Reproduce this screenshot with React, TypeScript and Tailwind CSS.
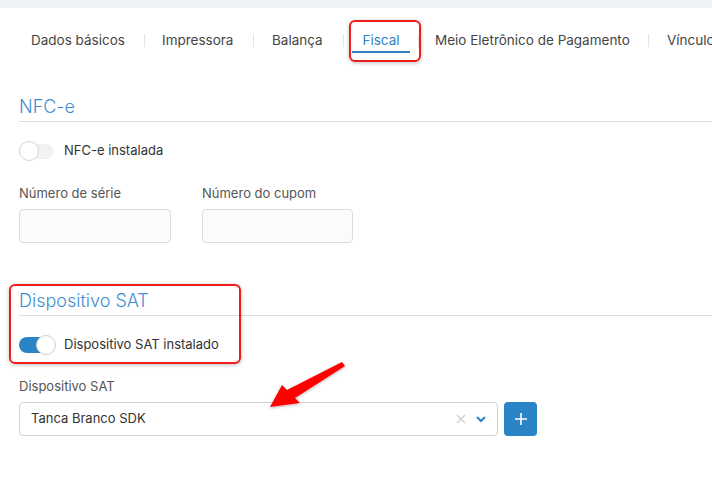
import React from 'react';

const FONT = { fontFamily: 'Inter, "Noto Sans", sans-serif' };

type Tab = { label: string; ml: string; w: string; sepMl?: string; active?: boolean };

const tabs: Tab[] = [
  { label: 'Dados básicos', ml: 'ml-0', w: 'w-[113px]' },
  { label: 'Impressora', ml: 'ml-[17px]', w: 'w-[91px]' },
  { label: 'Balança', ml: 'ml-[18px]', w: 'w-[71px]' },
  { label: 'Fiscal', ml: 'ml-[8px]', w: 'w-[58px]', active: true },
  { label: 'Meio Eletrônico de Pagamento', ml: 'ml-[16px]', w: 'w-[213px]', sepMl: 'ml-[8px]' },
  { label: 'Vínculo', ml: 'ml-[18px]', w: 'w-[80px]' },
];

const Toggle: React.FC<{ on?: boolean }> = ({ on }) =>
  on ? (
    <div className="relative w-[36px] h-[16px] rounded-full bg-[#2a84c6]">
      <div className="absolute right-[-1px] top-[-2px] w-[20px] h-[20px] rounded-full bg-white border border-[#cfcfcf]" />
    </div>
  ) : (
    <div className="relative w-[34px] h-[15px] rounded-full bg-[#f2f2f2] shadow-[inset_0_0_2px_rgba(0,0,0,0.06)]">
      <div className="absolute left-0 top-[-3px] w-[20px] h-[20px] rounded-full bg-white border border-[#d4d4d4]" />
    </div>
  );

const SectionTitle: React.FC<{ title: string }> = ({ title }) => (
  <div className="border-b border-[#dedede] h-[29px] flex items-center">
    <h2 className="text-[18px] font-light text-[#3f8fd2] leading-[28px]">{title}</h2>
  </div>
);

export default function App() {
  return (
    <div className="relative w-[712px] h-[480px] bg-white overflow-hidden text-[#333]" style={FONT}>
      <div className="h-[8px] bg-[#eef1f6]" />

      {/* abas */}
      <div className="flex items-start pl-[31px] pt-[22px] whitespace-nowrap text-[13.5px] text-[#454545]">
        {tabs.map((t, i) => (
          <React.Fragment key={t.label}>
            {i > 0 && (
              <div className={`w-px h-[13px] bg-[#e4e4e4] mt-[4px] shrink-0 ${t.sepMl ?? ''}`} />
            )}
            <div className={`${t.ml} ${t.w} shrink-0`}>
              {t.active ? (
                <div className="flex justify-center pb-[1px] border-b-2 border-[#2f7fc1] text-[#2f80c4] leading-[20px]">
                  {t.label}
                </div>
              ) : (
                <div className="leading-[20px]">{t.label}</div>
              )}
            </div>
          </React.Fragment>
        ))}
      </div>

      {/* NFC-e */}
      <div className="pl-[19px] mt-[40px]">
        <SectionTitle title="NFC-e" />
        <div className="flex items-center gap-[11px] mt-[21px] h-[16px]">
          <Toggle />
          <span className="text-[13px] text-[#333]">NFC-e instalada</span>
        </div>
        <div className="flex gap-[31px] mt-[24px]">
          <div>
            <div className="text-[13px] text-[#555] leading-[20px]">Número de série</div>
            <div className="mt-[6px] w-[152px] h-[34px] rounded-[4px] border border-[#dcdcdc] bg-[#fbfbfb]" />
          </div>
          <div>
            <div className="text-[13px] text-[#555] leading-[20px]">Número do cupom</div>
            <div className="mt-[6px] w-[151px] h-[34px] rounded-[4px] border border-[#dcdcdc] bg-[#fbfbfb]" />
          </div>
        </div>
      </div>

      {/* Dispositivo SAT */}
      <div className="pl-[19px] mt-[44px]">
        <SectionTitle title="Dispositivo SAT" />
        <div className="flex items-center gap-[9px] mt-[21px] h-[16px]">
          <Toggle on />
          <span className="text-[13px] text-[#333]">Dispositivo SAT instalado</span>
        </div>
        <div className="mt-[23px] text-[13px] text-[#555] leading-[20px]">Dispositivo SAT</div>
        <div className="flex gap-[6px] mt-[6px]">
          <div className="w-[479px] h-[34px] rounded-[4px] border border-[#d2d2d2] bg-white flex items-center pl-[11px] pr-[10px]">
            <span className="flex-1 text-[13px] text-[#333]">Tanca Branco SDK</span>
            <svg width="12" height="12" viewBox="0 0 12 12" className="mr-[8px]">
              <path d="M2 2 L10 10 M10 2 L2 10" stroke="#cfcfcf" strokeWidth="1.4" />
            </svg>
            <svg width="12" height="12" viewBox="0 0 12 12">
              <path d="M2 4 L6 8 L10 4" stroke="#2a84c6" strokeWidth="2" fill="none" />
            </svg>
          </div>
          <button className="w-[33px] h-[34px] rounded-[4px] bg-[#2a84c6] flex items-center justify-center">
            <svg width="14" height="14" viewBox="0 0 14 14">
              <path d="M7 1 V13 M1 7 H13" stroke="white" strokeWidth="1.6" />
            </svg>
          </button>
        </div>
      </div>

      {/* destaques */}
      <div className="absolute left-[349px] top-[20px] w-[72px] h-[42px] rounded-[6px] border-2 border-[#ee1c1c] shadow-[0_1px_4px_rgba(0,0,0,0.25)]" />
      <div className="absolute left-[9px] top-[284px] w-[232px] h-[80px] rounded-[6px] border-2 border-[#ee1c1c] shadow-[0_1px_4px_rgba(0,0,0,0.25)]" />

      <svg className="absolute left-0 top-0 pointer-events-none" width="712" height="480" viewBox="0 0 712 480">
        <defs>
          <filter id="sh" x="-20%" y="-20%" width="140%" height="140%">
            <feDropShadow dx="0" dy="1" stdDeviation="1.5" floodOpacity="0.3" />
          </filter>
        </defs>
        <path
          d="M342 362 L345 366 L295 398 L300 403 L270 407 L282 385 L287 390 Z"
          fill="#ff0000"
          filter="url(#sh)"
        />
      </svg>
    </div>
  );
}
